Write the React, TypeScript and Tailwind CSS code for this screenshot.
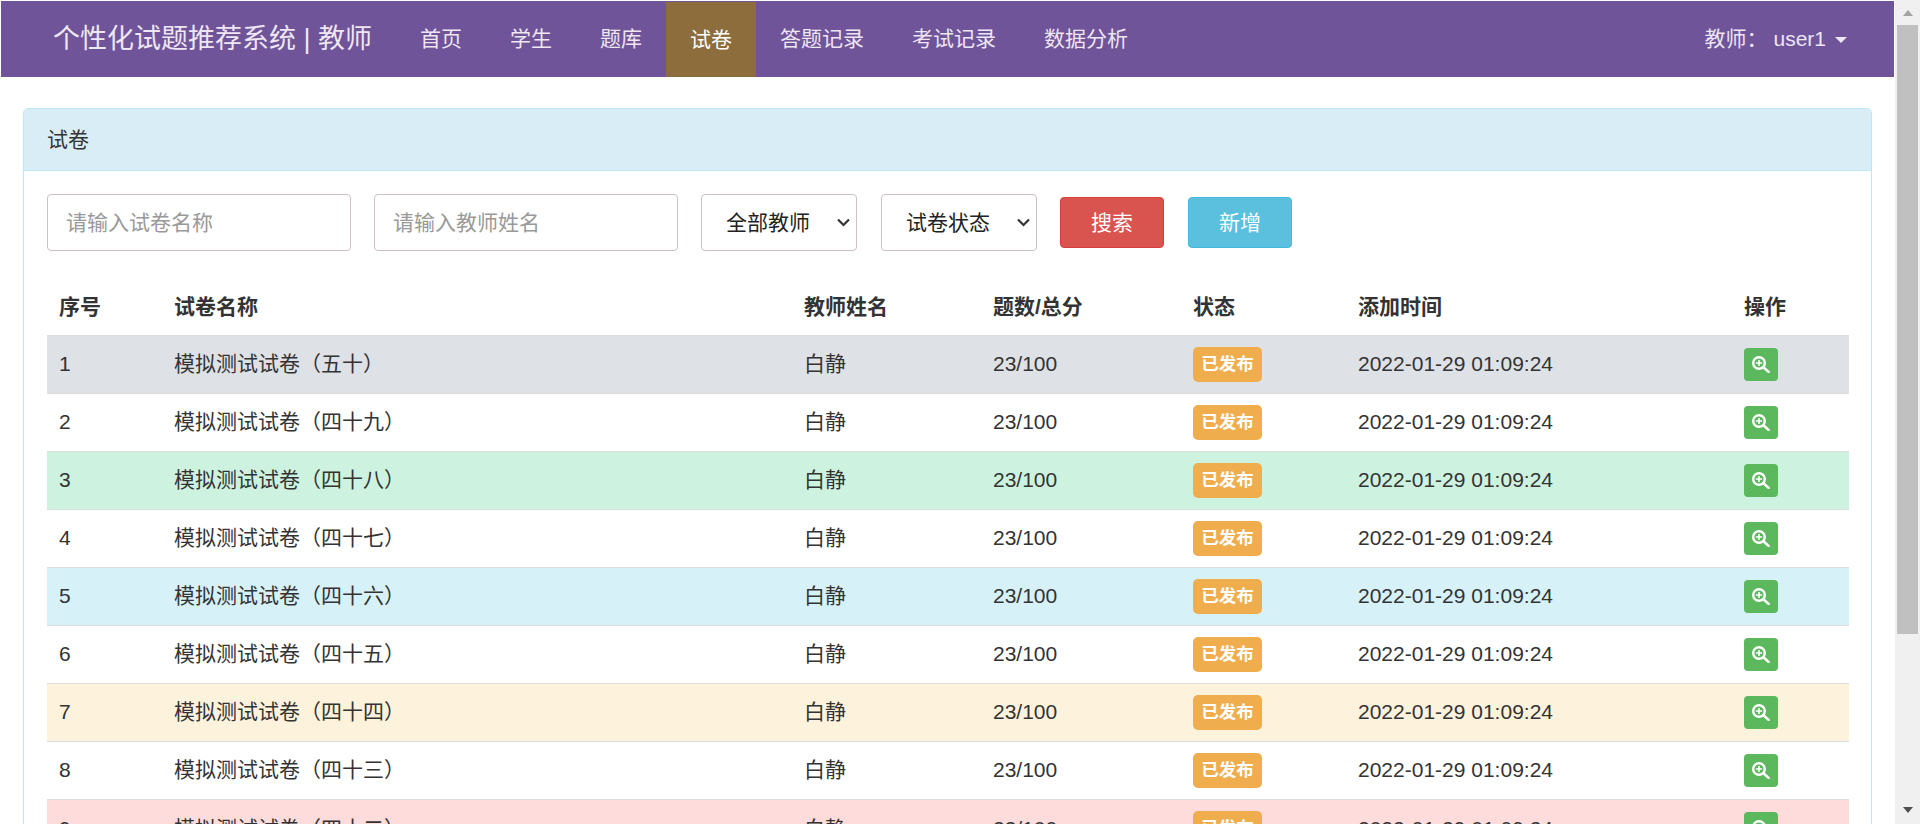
const navItems = ['首页', '学生', '题库', '试卷', '答题记录', '考试记录', '数据分析']

const rows = [
  { id: 1, name: '模拟测试试卷（五十）', tone: 'bg-[#dee1e6]' },
  { id: 2, name: '模拟测试试卷（四十九）', tone: 'bg-white' },
  { id: 3, name: '模拟测试试卷（四十八）', tone: 'bg-[#cdf3e0]' },
  { id: 4, name: '模拟测试试卷（四十七）', tone: 'bg-white' },
  { id: 5, name: '模拟测试试卷（四十六）', tone: 'bg-[#d6f1f8]' },
  { id: 6, name: '模拟测试试卷（四十五）', tone: 'bg-white' },
  { id: 7, name: '模拟测试试卷（四十四）', tone: 'bg-[#fdf2dc]' },
  { id: 8, name: '模拟测试试卷（四十三）', tone: 'bg-white' },
  { id: 9, name: '模拟测试试卷（四十二）', tone: 'bg-[#fedcdc]' },
]

const headers = ['序号', '试卷名称', '教师姓名', '题数/总分', '状态', '添加时间', '操作']
const colWidths = ['w-[115px]', 'w-[630px]', 'w-[189px]', 'w-[200px]', 'w-[165px]', 'w-[386px]', 'w-[117px]']

function ZoomIcon() {
  return (
    <svg width="18" height="17" viewBox="0 0 18 17" fill="none" stroke="white" className="mt-px">
      <circle cx="7" cy="7" r="5.8" strokeWidth="2.4" />
      <path d="M3.9 7h6.2M7 3.9v6.2" strokeWidth="1.7" />
      <path d="M11.4 11.2l5.2 4.7" strokeWidth="2.6" strokeLinecap="round" />
    </svg>
  )
}

function FilterSelect({ label }: { label: string }) {
  return (
    <div className="relative w-[156px]">
      <select className="h-[57px] w-full appearance-none rounded-[4px] border border-[#ccc0c6] bg-white pl-[24px] text-[#222]">
        <option>{label}</option>
      </select>
      <svg
        width="13"
        height="9"
        viewBox="0 0 13 9"
        fill="none"
        stroke="#333"
        strokeWidth="2.2"
        className="pointer-events-none absolute left-[136px] top-[24px]"
      >
        <path d="M1 1.5l5.5 5.5 5.5-5.5" />
      </svg>
    </div>
  )
}

export default function App() {
  return (
    <div className="flex h-[824px] overflow-hidden bg-white font-['Liberation_Sans','Noto_Sans_CJK_SC',sans-serif] text-[21px] text-[#333]">
      <div className="w-[1895px] shrink-0 pt-px">
        <nav className="ml-px mr-px flex h-[76px] items-stretch justify-between bg-[#6f5499] text-[#eee6f2]">
          <div className="flex items-stretch">
            <a className="flex items-center pl-[52px] pr-[24px] text-[27px]">个性化试题推荐系统 | 教师</a>
            {navItems.map(item => (
              <a
                key={item}
                className={`flex items-center px-[24px] ${item === '试卷' ? 'mt-px bg-[#8c6d3b] text-white' : ''}`}
              >
                {item}
              </a>
            ))}
          </div>
          <div className="flex items-center pr-[47px]">
            <span>教师：</span>
            <span className="ml-[6px]">user1</span>
            <span className="ml-[9px] mt-[2px] h-0 w-0 border-x-[6px] border-t-[6px] border-x-transparent border-t-[#eee6f2]" />
          </div>
        </nav>

        <div className="mx-[23px] mt-[31px] rounded-[5px] border border-[#bce8f1]">
          <div className="flex h-[62px] items-center rounded-t-[4px] border-b border-[#bce8f1] bg-[#d9edf7] px-[23px]">
            试卷
          </div>
          <div className="px-[23px] pt-[23px]">
            <div className="flex items-center gap-[23px]">
              <input
                placeholder="请输入试卷名称"
                className="h-[57px] w-[304px] rounded-[4px] border border-[#ccc0c6] px-[18px] placeholder:text-[#999]"
              />
              <input
                placeholder="请输入教师姓名"
                className="h-[57px] w-[304px] rounded-[4px] border border-[#ccc0c6] px-[18px] placeholder:text-[#999]"
              />
              <FilterSelect label="全部教师" />
              <div className="ml-px">
                <FilterSelect label="试卷状态" />
              </div>
              <button className="h-[51px] w-[104px] rounded-[4px] border border-[#d43f3a] bg-[#d9534f] text-white">搜索</button>
              <button className="ml-px h-[51px] w-[104px] rounded-[4px] border border-[#46b8da] bg-[#5bc0de] text-white">新增</button>
            </div>

            <table className="mt-[27px] w-[1802px] table-fixed border-collapse">
              <colgroup>
                {colWidths.map(w => (
                  <col key={w} className={w} />
                ))}
              </colgroup>
              <thead>
                <tr className="h-[57px]">
                  {headers.map(h => (
                    <th key={h} className="px-[12px] text-left font-bold">
                      {h}
                    </th>
                  ))}
                </tr>
              </thead>
              <tbody>
                {rows.map(r => (
                  <tr key={r.id} className={`h-[58px] border-t border-[#ddd] ${r.tone}`}>
                    <td className="px-[12px]">{r.id}</td>
                    <td className="px-[12px]">{r.name}</td>
                    <td className="px-[12px]">白静</td>
                    <td className="px-[12px]">23/100</td>
                    <td className="px-[12px]">
                      <span className="inline-flex h-[35px] w-[69px] items-center justify-center rounded-[5px] bg-[#f0ad4e] text-[17.5px] font-bold text-white">
                        已发布
                      </span>
                    </td>
                    <td className="px-[12px]">2022-01-29 01:09:24</td>
                    <td className="px-[12px]">
                      <span className="flex h-[33px] w-[34px] items-center justify-center rounded-[4px] bg-[#5cb85c]">
                        <ZoomIcon />
                      </span>
                    </td>
                  </tr>
                ))}
              </tbody>
            </table>
          </div>
        </div>
      </div>

      {/* scrollbar as it shows in the screenshot */}
      <div className="flex w-[25px] shrink-0 flex-col bg-[#f0f0f0]">
        <div className="flex h-[25px] shrink-0 items-center justify-center">
          <span className="h-0 w-0 border-x-[5.5px] border-b-[6px] border-x-transparent border-b-[#a3a3a3]" />
        </div>
        <div className="mx-[2px] h-[609px] bg-[#c0c0c0]" />
        <div className="mt-auto flex h-[25px] shrink-0 items-center justify-center pb-[3px]">
          <span className="h-0 w-0 border-x-[5.5px] border-t-[6px] border-x-transparent border-t-[#505050]" />
        </div>
      </div>
    </div>
  )
}
